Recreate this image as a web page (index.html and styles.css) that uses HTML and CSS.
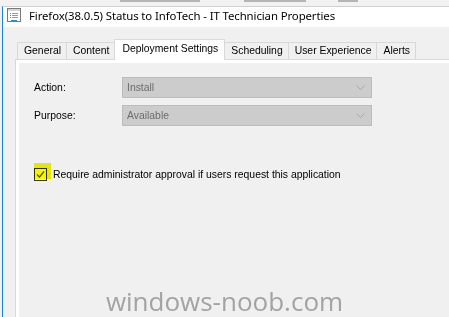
FILE: index.html
```html
<!DOCTYPE html>
<html lang="en">
<head>
  <meta charset="UTF-8" />
  <title>Firefox(38.0.5) Status to InfoTech - IT Technician Properties</title>
  <link rel="stylesheet" href="styles.css">
</head>
<body>

  <div class="backdrop">
    <span class="ghost g1"></span>
    <span class="ghost g2"></span>
    <span class="ghost g3"></span>
  </div>

  <div class="window">
    <div class="titlebar">
      <svg class="app-icon" width="14" height="14" viewBox="0 0 14 14">
        <rect x="0.5" y="0.5" width="13" height="13" fill="#fff" stroke="#7a7a7a"/>
        <rect x="1" y="1" width="12" height="2" fill="#d6d6d6"/>
        <rect x="3" y="5" width="1" height="1" fill="#7a7a7a"/>
        <rect x="5" y="5" width="6" height="1" fill="#9a9a9a"/>
        <rect x="3" y="7" width="1" height="1" fill="#7a7a7a"/>
        <rect x="5" y="7" width="6" height="1" fill="#9a9a9a"/>
        <rect x="3" y="9" width="1" height="1" fill="#7a7a7a"/>
        <rect x="5" y="9" width="6" height="1" fill="#9a9a9a"/>
        <rect x="4" y="12" width="6" height="1" fill="#1e90e0"/>
      </svg>
      <span class="title">Firefox(38.0.5) Status to InfoTech - IT Technician Properties</span>
    </div>

    <div class="dialog">
      <div class="tabs">
        <div class="tab">General</div>
        <div class="tab">Content</div>
        <div class="tab active">Deployment Settings</div>
        <div class="tab">Scheduling</div>
        <div class="tab">User Experience</div>
        <div class="tab">Alerts</div>
      </div>

      <div class="panel">
        <div class="page">
          <div class="field">
            <label>Action:</label>
            <div class="select">
              <span>Install</span>
              <svg width="9" height="5" viewBox="0 0 9 5"><path d="M0.5 0.5 L4.5 4.5 L8.5 0.5" fill="none" stroke="#a8a8a8"/></svg>
            </div>
          </div>
          <div class="field">
            <label>Purpose:</label>
            <div class="select">
              <span>Available</span>
              <svg width="9" height="5" viewBox="0 0 9 5"><path d="M0.5 0.5 L4.5 4.5 L8.5 0.5" fill="none" stroke="#a8a8a8"/></svg>
            </div>
          </div>

          <div class="check-row">
            <div class="checkbox">
              <svg width="11" height="11" viewBox="0 0 11 11"><path d="M2 5.5 L4.5 8 L9 2.5" fill="none" stroke="#5a5a1a" stroke-width="1.3"/></svg>
              <div class="highlight"></div>
            </div>
            <span>Require administrator approval if users request this application</span>
          </div>
        </div>
      </div>
    </div>
  </div>

  <div class="watermark">windows-noob.com</div>

</body>
</html>
```

FILE: styles.css
```css
body {
  margin: 0;
  width: 449px;
  height: 317px;
  overflow: hidden;
  background: #f0f0f0;
  font-family: 'Liberation Sans', Arial, sans-serif;
  font-size: 10.4px;
  color: #000;
  position: relative;
}

.backdrop {
  height: 6px;
  background: #f2f2f2;
  display: flex;
  align-items: flex-start;
}

/* bottoms of the text of the window behind */
.ghost {
  height: 2px;
  background: #b4b4b4;
}

.g1 { margin-left: 120px; width: 80px; }
.g2 { margin-left: 44px; width: 62px; }
.g3 { margin-left: 32px; width: 20px; }

.window {
  margin-left: 2px;
  width: 470px;
  border-left: 1px solid #1883d7;
  border-top: 1px solid #d0d0d0;
  background: #f0f0f0;
}

.titlebar {
  height: 20px;
  background: #fff;
  display: flex;
  align-items: center;
  padding: 0 0 4px 4px;
  box-sizing: border-box;
}

.app-icon {
  margin-right: 8px;
}

.title {
  font-family: 'Noto Sans', sans-serif;
  font-size: 11.4px;
  color: #000;
  letter-spacing: -0.1px;
}

.dialog {
  padding: 12px 0 0 12px;
}

.tabs {
  display: flex;
  align-items: flex-end;
  margin-left: 2px;
  height: 20px;
}

.tab {
  height: 16px;
  line-height: 16px;
  padding: 0 5px 0 6px;
  border: 1px solid #d9d9d9;
  border-bottom: none;
  border-left: none;
  background: #f0f0f0;
  color: #000;
  white-space: nowrap;
}

.tab:first-child {
  border-left: 1px solid #d9d9d9;
}

.tab.active {
  height: 20px;
  line-height: 18px;
  background: #fff;
  border-left: 1px solid #d9d9d9;
  margin-left: -1px;
  margin-bottom: -1px;
  padding: 0 6px 0 7px;
  position: relative;
}

.panel {
  border: 1px solid #d9d9d9;
  background: #fff;
  padding: 3px 0 0 3px;
  height: 300px;
}

.page {
  background: #f0f0f0;
  height: 100%;
  padding: 14px 0 0 15px;
}

.field {
  display: flex;
  align-items: center;
  margin-bottom: 7px;
}

.field label {
  width: 88px;
}

.select {
  width: 238px;
  height: 19px;
  border: 1px solid #bcbcbc;
  background: #cccccc;
  display: flex;
  align-items: center;
  justify-content: space-between;
  padding: 0 6px 0 4px;
  color: #6d6d6d;
}

.check-row {
  display: flex;
  align-items: center;
  margin-top: 42px;
}

.checkbox {
  width: 11px;
  height: 11px;
  border: 1px solid #333;
  background: #fff;
  margin-right: 6px;
  position: relative;
  display: flex;
}

.highlight {
  position: absolute;
  left: -1px;
  top: -6px;
  width: 17px;
  height: 16px;
  background: #f5f500;
  mix-blend-mode: multiply;
}

.watermark {
  position: absolute;
  left: 0;
  right: 0;
  top: 288px;
  line-height: 26px;
  text-align: center;
  font-family: 'Open Sans', sans-serif;
  font-size: 26px;
  color: #a3a3a3;
}
```
